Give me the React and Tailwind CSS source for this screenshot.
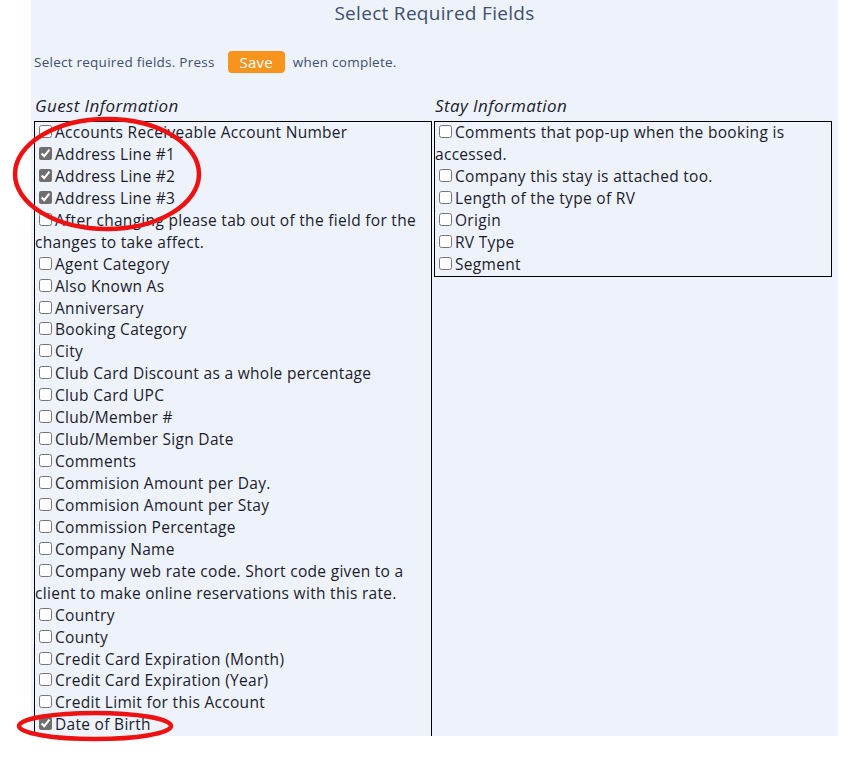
import React from "react";

const guest = [
  ["Accounts Receiveable Account Number", false],
  ["Address Line #1", true],
  ["Address Line #2", true],
  ["Address Line #3", true],
  ["After changing please tab out of the field for the changes to take affect.", false],
  ["Agent Category", false],
  ["Also Known As", false],
  ["Anniversary", false],
  ["Booking Category", false],
  ["City", false],
  ["Club Card Discount as a whole percentage", false],
  ["Club Card UPC", false],
  ["Club/Member #", false],
  ["Club/Member Sign Date", false],
  ["Comments", false],
  ["Commision Amount per Day.", false],
  ["Commision Amount per Stay", false],
  ["Commission Percentage", false],
  ["Company Name", false],
  ["Company web rate code. Short code given to a client to make online reservations with this rate.", false],
  ["Country", false],
  ["County", false],
  ["Credit Card Expiration (Month)", false],
  ["Credit Card Expiration (Year)", false],
  ["Credit Limit for this Account", false],
  ["Date of Birth", true],
];

const stay = [
  ["Comments that pop-up when the booking is accessed.", false],
  ["Company this stay is attached too.", false],
  ["Length of the type of RV", false],
  ["Origin", false],
  ["RV Type", false],
  ["Segment", false],
];

function Item({ label, checked }) {
  return (
    <div>
      <input
        type="checkbox"
        defaultChecked={checked}
        className="ml-[4px] mr-[3px] my-[3px] w-[13px] h-[13px] accent-[#6f6f6f] align-baseline"
      />
      {label}
    </div>
  );
}

export default function App() {
  return (
    <div className="relative w-[850px] h-[758px] bg-white font-['Open_Sans',sans-serif] overflow-hidden">
      <div className="ml-[31px] w-[807px] h-[736px] bg-[#eef2fa] overflow-hidden pl-[3px]">
        <h1 className="text-center text-[19px] tracking-[0.3px] leading-[27px] text-[#3e4f70] pr-[3px]">
          Select Required Fields
        </h1>
        <div className="mt-[24px] flex items-center h-[22px] text-[13.5px] tracking-[0.25px] text-[#3e4f70]">
          <span>Select required fields. Press</span>
          <button className="ml-[13px] w-[57px] h-[22px] rounded-[4px] bg-[#f7941d] text-white text-[15px] tracking-[0.2px] leading-[22px]">
            Save
          </button>
          <span className="ml-[8px]">when complete.</span>
        </div>
        <div className="mt-[22px] grid grid-cols-[398px_398px] gap-x-[2px] items-start text-[15.5px] tracking-[0.3px] leading-[21.93px] text-[#1a1c2e]">
          <div>
            <div className="pl-[1px] italic text-[17px] tracking-[0.4px] mb-[4px] leading-[22px]">Guest Information</div>
            <div className="border border-black">
              {guest.map(([l, c]) => (
                <Item key={l} label={l} checked={c} />
              ))}
            </div>
          </div>
          <div>
            <div className="pl-[1px] italic text-[17px] tracking-[0.4px] mb-[4px] leading-[22px]">Stay Information</div>
            <div className="border border-black">
              {stay.map(([l, c]) => (
                <Item key={l} label={l} checked={c} />
              ))}
            </div>
          </div>
        </div>
      </div>
      <svg className="absolute left-0 top-0 pointer-events-none" width="850" height="758" viewBox="0 0 850 758">
        <ellipse cx="107" cy="174" rx="92" ry="55" fill="none" stroke="#ee1111" strokeWidth="4.5" />
        <ellipse cx="95" cy="726" rx="76" ry="13" fill="none" stroke="#ee1111" strokeWidth="4.5" />
      </svg>
    </div>
  );
}
